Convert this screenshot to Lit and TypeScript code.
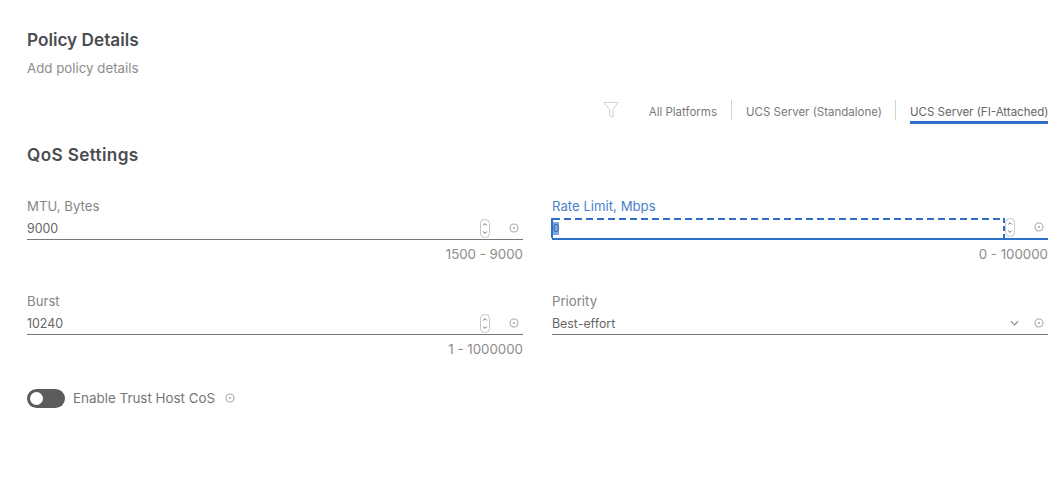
import { LitElement, html, css, svg } from "lit";
import { customElement } from "lit/decorators.js";

const info = html`<svg class="info" viewBox="0 0 10 10" width="10" height="10">
  <circle cx="5" cy="5" r="4" fill="none" stroke="#a8a8a8" stroke-width="1.1"/>
  <circle cx="5" cy="5" r="1.1" fill="#a8a8a8"/>
</svg>`;

const spinner = html`<svg class="spin" viewBox="0 0 10 19" width="10" height="19">
  <rect x="0.5" y="0.5" width="9" height="18" rx="4" fill="#fff" stroke="#c4c4c4" stroke-width="1"/>
  ${svg`<path d="M3.2 6.4 L5 4.6 L6.8 6.4" fill="none" stroke="#6a6a6a" stroke-width="1"/>`}
  ${svg`<path d="M3.2 12.6 L5 14.4 L6.8 12.6" fill="none" stroke="#6a6a6a" stroke-width="1"/>`}
</svg>`;

@customElement("app-root")
export class AppRoot extends LitElement {
  static styles = css`
    :host {
      display: block;
      width: 1064px;
      height: 498px;
      box-sizing: border-box;
      padding: 30px 16px 0 27px;
      background: #fff;
      font-family: Inter, "Noto Sans", sans-serif;
      color: #5f5f5f;
      overflow: hidden;
    }
    h1, h2 {
      margin: 0;
      font-size: 17.2px;
      line-height: 20px;
      font-weight: 600;
      color: #4a4c50;
    }
    h2 { margin-top: 21px; letter-spacing: 0.35px; }
    .sub {
      margin-top: 8px;
      font-size: 13.3px;
      line-height: 20px;
      color: #8c8c8c;
    }
    .tabs {
      display: flex;
      justify-content: flex-end;
      align-items: center;
      height: 24px;
      margin-top: 22px;
      font-size: 11.5px;
      color: #7a7a7a;
    }
    .filter { margin-right: 30px; margin-top: -4px; }
    .tab {
      height: 24px;
      line-height: 25px;
      box-sizing: border-box;
      white-space: nowrap;
    }
    .tab.mid { width: 135px; }
    .sep {
      width: 1px;
      height: 20px;
      margin: -4px 14px 0;
      background: #d0d0d0;
    }
    .tab.active {
      border-bottom: 3px solid #2f6fc9;
      width: 138px;
      color: #666;
    }
    .grid {
      display: grid;
      grid-template-columns: 496px 496px;
      column-gap: 29px;
      row-gap: 25px;
      margin-top: 31px;
    }
    .field { height: 70px; position: relative; }
    .label {
      font-size: 13.2px;
      line-height: 20px;
      height: 20px;
      color: #858585;
    }
    .label.focus { color: #4a80cc; }
    .control {
      display: flex;
      align-items: center;
      height: 24px;
      box-sizing: border-box;
      border-bottom: 1px solid #777;
      font-size: 12.4px;
      color: #666;
    }
    .value { flex: 1; line-height: 16px; padding-top: 2px; }
    .spin { margin-right: 19px; margin-top: 1px; flex: none; }
    .info { margin-right: 4px; flex: none; }
    .chev { margin-right: 15px; flex: none; }
    .hint {
      text-align: right;
      font-size: 13.3px;
      line-height: 20px;
      margin-top: 4px;
      color: #8c8c8c;
    }
    .control.focus { border-bottom: 2px solid #2f6fc9; }
    .focusbox {
      flex: 1;
      align-self: stretch;
      margin: 2px 0 0 -1px;
      box-sizing: border-box;
      border-left: 2px solid #2f6fc9;
      background-image:
        repeating-linear-gradient(90deg, #2f6fc9 0 7px, transparent 7px 11px),
        repeating-linear-gradient(180deg, #2f6fc9 0 5px, transparent 5px 8px);
      background-size: 100% 2px, 2px 100%;
      background-position: left top, right top;
      background-repeat: no-repeat;
      display: flex;
      align-items: center;
    }
    .caret {
      width: 6px;
      height: 13px;
      background: #7ea8e2;
      color: #2f5fa8;
      font-size: 10px;
      line-height: 13px;
      text-align: center;
    }
    .toggle {
      display: flex;
      align-items: center;
      margin-top: 27px;
      height: 20px;
      font-size: 13.4px;
      color: #767676;
    }
    .switch {
      width: 38px;
      height: 19px;
      border-radius: 10px;
      background: #5c5c5c;
      margin-right: 8px;
      display: flex;
      align-items: center;
      padding-left: 3px;
      box-sizing: border-box;
    }
    .knob { width: 13px; height: 13px; border-radius: 50%; background: #fff; }
    .toggle .info { margin-left: 10px; }
  `;

  render() {
    return html`
      <h1>Policy Details</h1>
      <div class="sub">Add policy details</div>
      <div class="tabs">
        <svg class="filter" viewBox="0 0 16 18" width="16" height="18">
          <path d="M1 1.5 H15 L10 8.5 V16.5 L6.5 14.5 V8.5 Z" fill="none" stroke="#d2d2d2" stroke-width="1"/>
        </svg>
        <div class="tab">All Platforms</div>
        <div class="sep"></div>
        <div class="tab mid">UCS Server (Standalone)</div>
        <div class="sep"></div>
        <div class="tab active">UCS Server (FI-Attached)</div>
      </div>
      <h2>QoS Settings</h2>
      <div class="grid">
        <div class="field">
          <div class="label">MTU, Bytes</div>
          <div class="control"><div class="value">9000</div>${spinner}${info}</div>
          <div class="hint">1500 - 9000</div>
        </div>
        <div class="field">
          <div class="label focus">Rate Limit, Mbps</div>
          <div class="control focus">
            <div class="focusbox"><div class="caret">0</div></div>
            ${spinner}${info}
          </div>
          <div class="hint">0 - 100000</div>
        </div>
        <div class="field">
          <div class="label">Burst</div>
          <div class="control"><div class="value">10240</div>${spinner}${info}</div>
          <div class="hint">1 - 1000000</div>
        </div>
        <div class="field">
          <div class="label">Priority</div>
          <div class="control">
            <div class="value">Best-effort</div>
            <svg class="chev" viewBox="0 0 10 6" width="9" height="6">
              <path d="M1 1 L5 5 L9 1" fill="none" stroke="#8a8a8a" stroke-width="1.3"/>
            </svg>
            ${info}
          </div>
          <div class="hint"></div>
        </div>
      </div>
      <div class="toggle">
        <div class="switch"><div class="knob"></div></div>
        <span>Enable Trust Host CoS</span>
        ${info}
      </div>
    `;
  }
}
